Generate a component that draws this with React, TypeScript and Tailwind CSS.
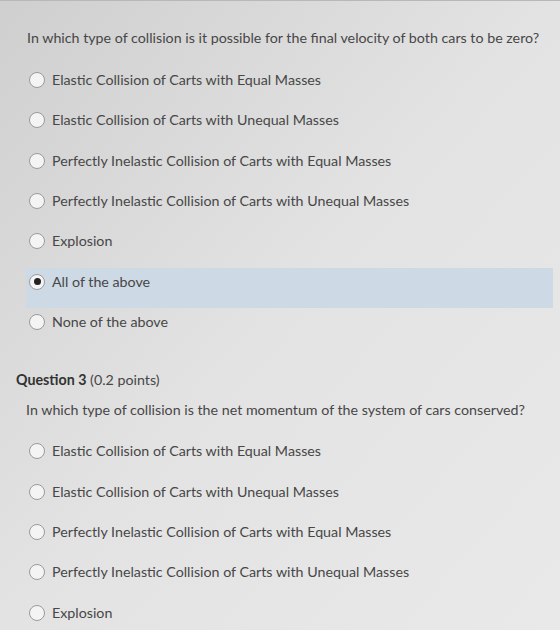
import type { ReactNode } from "react";

const firstOptions = [
  "Elastic Collision of Carts with Equal Masses",
  "Elastic Collision of Carts with Unequal Masses",
  "Perfectly Inelastic Collision of Carts with Equal Masses",
  "Perfectly Inelastic Collision of Carts with Unequal Masses",
  "Explosion",
  "All of the above",
  "None of the above",
];

const secondOptions = [
  "Elastic Collision of Carts with Equal Masses",
  "Elastic Collision of Carts with Unequal Masses",
  "Perfectly Inelastic Collision of Carts with Equal Masses",
  "Perfectly Inelastic Collision of Carts with Unequal Masses",
  "Explosion",
];

function Radio({ checked }: { checked: boolean }) {
  return (
    <span className="flex size-[16px] shrink-0 items-center justify-center rounded-full border border-[#9a9a9a] bg-[#f4f4f4]">
      {checked && <span className="size-[7px] rounded-full bg-[#222]" />}
    </span>
  );
}

function Option({ label, checked = false }: { label: string; checked?: boolean }) {
  return (
    <div
      className={`flex h-[40.33px] items-start gap-[7px] pl-[3px] pt-[4px] ${
        checked ? "bg-[#cdd9e4]" : ""
      }`}
    >
      <span className="flex h-[20px] items-center">
        <Radio checked={checked} />
      </span>
      <span className="leading-[20px]">{label}</span>
    </div>
  );
}

function OptionList({ children }: { children: ReactNode }) {
  return <div className="ml-[26px] mr-[7px] flex flex-col">{children}</div>;
}

export default function App() {
  return (
    <div
      className="h-[630px] w-[560px] overflow-hidden border-t border-[#b8b8b8] bg-gradient-to-br from-[#cfcfcf] via-[#e3e3e3] to-[#e9e9e9] text-[14.25px] text-[#474747]"
      style={{ fontFamily: "Lato, 'Liberation Sans', sans-serif" }}
    >
      <p className="ml-[27px] mt-[27px] leading-[20px]">
        In which type of collision is it possible for the final velocity of both cars to be zero?
      </p>
      <div className="mt-[18px]">
        <OptionList>
          {firstOptions.map((option) => (
            <Option key={option} label={option} checked={option === "All of the above"} />
          ))}
        </OptionList>
      </div>

      <p className="ml-[16px] mt-[22px] leading-[20px]">
        <span className="font-bold text-[#333]">Question 3</span> (0.2 points)
      </p>
      <p className="ml-[26px] mt-[10px] leading-[20px]">
        In which type of collision is the net momentum of the system of cars conserved?
      </p>
      <div className="mt-[17px]">
        <OptionList>
          {secondOptions.map((option) => (
            <Option key={option} label={option} />
          ))}
        </OptionList>
      </div>
    </div>
  );
}
